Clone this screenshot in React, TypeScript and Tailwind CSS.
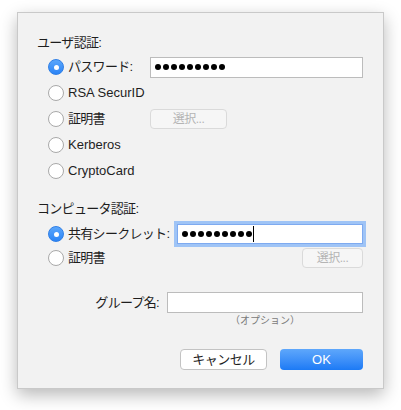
import React from 'react';

const font = { fontFamily: '"Liberation Sans", "Noto Sans CJK JP", sans-serif' };

const Radio: React.FC<{ checked?: boolean }> = ({ checked }) =>
  checked ? (
    <span className="flex h-[16px] w-[16px] shrink-0 items-center justify-center rounded-full bg-gradient-to-b from-[#5aa6fb] to-[#2a84f6] border border-[#2f7fe6]">
      <span className="h-[5px] w-[5px] rounded-full bg-white" />
    </span>
  ) : (
    <span className="h-[16px] w-[16px] shrink-0 rounded-full border border-[#a9a9a9] bg-white" />
  );

const Dots: React.FC = () => (
  <div className="flex gap-[2px]">
    {Array.from({ length: 9 }).map((_, i) => (
      <span key={i} className="h-[6px] w-[6px] rounded-full bg-black" />
    ))}
  </div>
);

const SelectButton: React.FC<{ width: string }> = ({ width }) => (
  <div
    className={`flex h-[20px] ${width} items-center justify-center rounded-[4px] border border-[#dadada] bg-[#f6f6f6] text-[12px] tracking-[-0.5px] text-[#b4b4b4]`}
  >
    選択...
  </div>
);

const App: React.FC = () => {
  return (
    <div className="min-h-[410px] w-[401px] bg-white pl-[17px] pt-[12px]" style={font}>
      <div className="flex h-[377px] w-[367px] flex-col border border-[#c9c9c9] bg-[#f2f2f2] pl-[19px] pr-[20px] pt-[19px] text-[13px] text-[#1e1e1e] shadow-[0_6px_16px_rgba(0,0,0,0.28)]">
        <div className="flex h-[22px] items-center tracking-[-0.7px]">ユーザ認証:</div>

        <div className="ml-[11px] flex flex-col">
          <div className="flex h-[26px] items-center">
            <div className="flex w-[102px] items-center gap-[4px]">
              <Radio checked />
              <span className="tracking-[-0.7px]">パスワード:</span>
            </div>
            <div className="flex h-[21px] w-[213px] items-center border border-[#bcbcbc] bg-white pl-[4px]">
              <Dots />
            </div>
          </div>
          <div className="flex h-[26px] items-center gap-[4px]">
            <Radio />
            <span>RSA SecurID</span>
          </div>
          <div className="flex h-[26px] items-center">
            <div className="flex w-[102px] items-center gap-[4px]">
              <Radio />
              <span className="tracking-[-0.7px]">証明書</span>
            </div>
            <SelectButton width="w-[77px]" />
          </div>
          <div className="flex h-[26px] items-center gap-[4px]">
            <Radio />
            <span>Kerberos</span>
          </div>
          <div className="flex h-[26px] items-center gap-[4px]">
            <Radio />
            <span>CryptoCard</span>
          </div>
        </div>

        <div className="mt-[14px] flex h-[22px] items-center tracking-[-0.7px]">コンピュータ認証:</div>

        <div className="ml-[11px] mt-[2px] flex flex-col">
          <div className="flex h-[24px] items-center">
            <div className="flex w-[129px] items-center gap-[4px]">
              <Radio checked />
              <span className="tracking-[-0.7px]">共有シークレット:</span>
            </div>
            <div className="flex h-[20px] flex-1 items-center border border-[#7eaaf0] bg-white pl-[4px] ring-[3px] ring-[#9fc4f6]">
              <Dots />
              <span className="ml-[1px] h-[16px] w-[1px] bg-black" />
            </div>
          </div>
          <div className="flex h-[24px] items-center justify-between">
            <div className="flex items-center gap-[4px]">
              <Radio />
              <span className="tracking-[-0.7px]">証明書</span>
            </div>
            <SelectButton width="w-[61px]" />
          </div>
        </div>

        <div className="mt-[22px] flex items-center justify-end gap-[8px]">
          <span className="tracking-[-0.7px]">グループ名:</span>
          <div className="h-[21px] w-[196px] border border-[#bcbcbc] bg-white" />
        </div>
        <div className="flex justify-end">
          <div className="w-[196px] pt-[2px] text-center text-[10px] leading-[12px] text-[#7a7a7a]">（オプション）</div>
        </div>

        <div className="mt-[22px] flex justify-end gap-[13px]">
          <button className="flex h-[21px] w-[87px] items-center justify-center rounded-[4px] border border-[#c3c3c3] bg-white text-[13px] tracking-[-0.5px] text-[#1e1e1e]">
            キャンセル
          </button>
          <button className="flex h-[21px] w-[83px] items-center justify-center rounded-[4px] bg-gradient-to-b from-[#5ea7fb] to-[#1b7af5] text-[13px] text-white">
            OK
          </button>
        </div>
      </div>
    </div>
  );
};

export default App;
